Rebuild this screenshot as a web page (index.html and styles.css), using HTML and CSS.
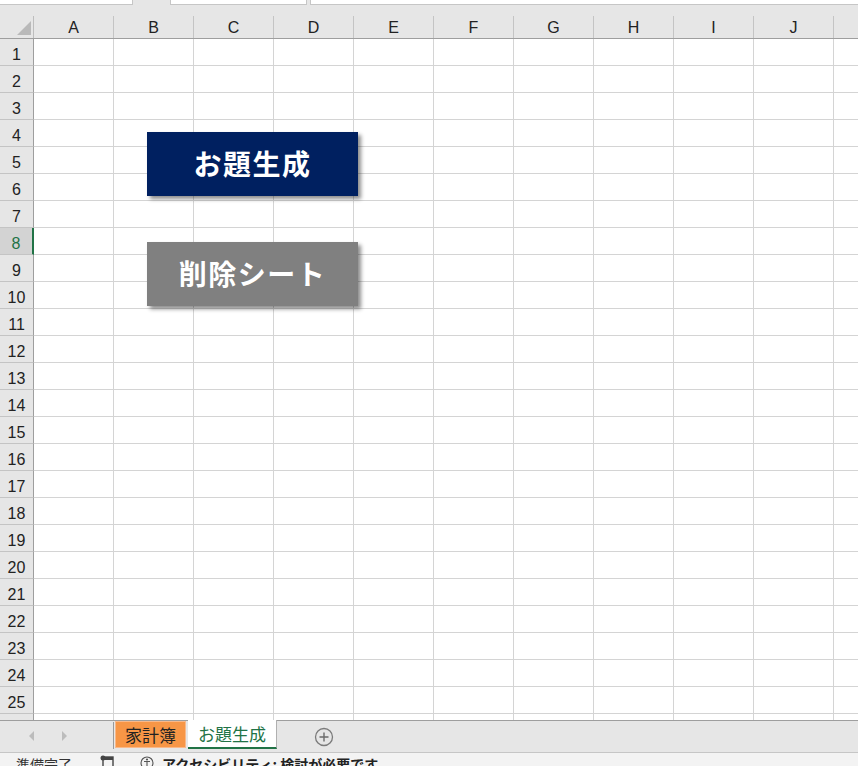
FILE: index.html
```html
<!DOCTYPE html>
<html lang="ja">
<head>
<meta charset="utf-8">
<title>Excel</title>
<link rel="stylesheet" href="styles.css">
</head>
<body>
<div class="app">
  <div class="formula-strip">
    <div class="fbox fbox-name"></div>
    <div class="fbox fbox-mid"></div>
    <div class="fbox fbox-formula"></div>
  </div>

  <div class="col-header">
    <div class="corner"><span class="corner-tri"></span></div>
    <div class="ch">A</div><div class="ch">B</div><div class="ch">C</div><div class="ch">D</div><div class="ch">E</div>
    <div class="ch">F</div><div class="ch">G</div><div class="ch">H</div><div class="ch">I</div><div class="ch">J</div><div class="ch"></div>
  </div>

  <div class="sheet">
    <div class="row"><div class="rh">1</div><div class="cells"></div></div>
    <div class="row"><div class="rh">2</div><div class="cells"></div></div>
    <div class="row"><div class="rh">3</div><div class="cells"></div></div>
    <div class="row"><div class="rh">4</div><div class="cells"></div></div>
    <div class="row"><div class="rh">5</div><div class="cells"></div></div>
    <div class="row"><div class="rh">6</div><div class="cells"></div></div>
    <div class="row"><div class="rh">7</div><div class="cells"></div></div>
    <div class="row"><div class="rh rh-active">8</div><div class="cells"></div></div>
    <div class="row"><div class="rh">9</div><div class="cells"></div></div>
    <div class="row"><div class="rh">10</div><div class="cells"></div></div>
    <div class="row"><div class="rh">11</div><div class="cells"></div></div>
    <div class="row"><div class="rh">12</div><div class="cells"></div></div>
    <div class="row"><div class="rh">13</div><div class="cells"></div></div>
    <div class="row"><div class="rh">14</div><div class="cells"></div></div>
    <div class="row"><div class="rh">15</div><div class="cells"></div></div>
    <div class="row"><div class="rh">16</div><div class="cells"></div></div>
    <div class="row"><div class="rh">17</div><div class="cells"></div></div>
    <div class="row"><div class="rh">18</div><div class="cells"></div></div>
    <div class="row"><div class="rh">19</div><div class="cells"></div></div>
    <div class="row"><div class="rh">20</div><div class="cells"></div></div>
    <div class="row"><div class="rh">21</div><div class="cells"></div></div>
    <div class="row"><div class="rh">22</div><div class="cells"></div></div>
    <div class="row"><div class="rh">23</div><div class="cells"></div></div>
    <div class="row"><div class="rh">24</div><div class="cells"></div></div>
    <div class="row"><div class="rh">25</div><div class="cells"></div></div>
    <div class="row"><div class="rh"></div><div class="cells"></div></div>

    <div class="shape shape-navy">お題生成</div>
    <div class="shape shape-gray">削除シート</div>
  </div>

  <div class="tabbar">
    <div class="tab-nav">
      <svg class="nav-arrow" width="6" height="10" viewBox="0 0 6 10"><path d="M5 0 L0 5 L5 10 Z" fill="#bcbcbc"/></svg>
      <svg class="nav-arrow" width="6" height="10" viewBox="0 0 6 10"><path d="M1 0 L6 5 L1 10 Z" fill="#bcbcbc"/></svg>
    </div>
    <div class="tab-sep"></div>
    <div class="tab tab-orange">家計簿</div>
    <div class="tab tab-active">お題生成</div>
    <div class="tab-add">
      <svg width="20" height="20" viewBox="0 0 20 20"><circle cx="10" cy="10" r="8.5" fill="none" stroke="#7b7b7b" stroke-width="1.3"/><path d="M10 5.5 V14.5 M5.5 10 H14.5" stroke="#6b6b6b" stroke-width="1.4"/></svg>
    </div>
  </div>

  <div class="statusbar">
    <span class="st-ready">準備完了</span>
    <svg class="st-icon" width="16" height="14" viewBox="0 0 16 14"><rect x="3" y="2" width="10" height="10" fill="none" stroke="#444" stroke-width="1.4"/><rect x="3" y="2" width="10" height="3" fill="#444"/><circle cx="3" cy="3" r="2.5" fill="#444"/></svg>
    <svg class="st-icon st-acc" width="16" height="14" viewBox="0 0 16 14"><circle cx="7" cy="8" r="6" fill="none" stroke="#555" stroke-width="1.1"/><circle cx="7" cy="4.5" r="1.1" fill="#555"/><path d="M4 6.5 H10 M7 6.5 V12" stroke="#555" stroke-width="1.1"/></svg>
    <span class="st-acc-text">アクセシビリティ: 検討が必要です</span>
  </div>
</div>
</body>
</html>
```

FILE: styles.css
```css
* { box-sizing: border-box; }

html, body {
  margin: 0;
  padding: 0;
}

body {
  width: 858px;
  height: 766px;
  overflow: hidden;
  background: #e6e6e6;
  font-family: "Liberation Sans", Arial, "Noto Sans CJK JP", sans-serif;
  color: #222;
}

.app {
  width: 858px;
  height: 766px;
  display: flex;
  flex-direction: column;
  overflow: hidden;
}

/* top strip (remains of the formula bar) */
.formula-strip {
  height: 16px;
  flex: none;
  display: flex;
  align-items: flex-start;
}

.fbox {
  height: 5px;
  background: #fff;
  border: 1px solid #c6c6c6;
  border-top: none;
}

.fbox-name { width: 133px; border-left: none; }
.fbox-mid { width: 137px; margin-left: 37px; }
.fbox-formula { flex: 1; margin-left: 3px; border-right: none; }

/* column header */
.col-header {
  height: 23px;
  flex: none;
  display: flex;
  border-bottom: 1px solid #9e9e9e;
  background: #e6e6e6;
}

.corner {
  width: 34px;
  flex: none;
  border-right: 1px solid #bdbdbd;
  position: relative;
}

.corner-tri {
  position: absolute;
  right: 2px;
  bottom: 3px;
  width: 0;
  height: 0;
  border-left: 14px solid transparent;
  border-bottom: 14px solid #b9b9b9;
}

.ch {
  width: 80px;
  flex: none;
  border-right: 1px solid #c4c4c4;
  text-align: center;
  font-size: 16px;
  line-height: 24px;
  color: #222;
}

/* sheet grid */
.sheet {
  flex: 1;
  position: relative;
  overflow: hidden;
  background: #fff;
}

.row {
  display: flex;
  height: 27px;
}

.rh {
  width: 34px;
  flex: none;
  background: #e6e6e6;
  border-right: 1px solid #9e9e9e;
  border-bottom: 1px solid #c4c4c4;
  text-align: center;
  font-size: 16px;
  line-height: 31px;
  color: #222;
}

.rh-active {
  background: #d3d3d3;
  color: #217346;
  border-right: 2px solid #217346;
}

.cells {
  flex: 1;
  border-bottom: 1px solid #d4d4d4;
  background: repeating-linear-gradient(to right, #fff 0 79px, #d4d4d4 79px 80px);
}

/* floating shapes (buttons) */
.shape {
  position: absolute;
  left: 147px;
  width: 211px;
  height: 64px;
  display: flex;
  align-items: center;
  justify-content: center;
  padding-bottom: 3px;
  color: #fff;
  font-family: "Noto Sans CJK JP", sans-serif;
  font-weight: 700;
  font-size: 28px;
  letter-spacing: 1.5px;
  box-shadow: 3px 3px 4px rgba(0, 0, 0, 0.45);
}

.shape-navy {
  top: 93px;
  background: #002060;
}

.shape-gray {
  top: 203px;
  background: #808080;
}

/* sheet tab bar */
.tabbar {
  height: 32px;
  flex: none;
  display: flex;
  align-items: flex-start;
  background: #e6e6e6;
  border-top: 1px solid #9e9e9e;
}

.tab-nav {
  width: 113px;
  height: 30px;
  display: flex;
  align-items: center;
  padding-left: 29px;
  gap: 26px;
}

.tab-sep {
  width: 1px;
  height: 27px;
  margin-top: 1px;
  background: #9a9a9a;
}

.tab {
  height: 28px;
  font-family: "Noto Sans CJK JP", sans-serif;
  font-size: 17px;
  line-height: 26px;
  text-align: center;
}

.tab-orange {
  width: 71px;
  margin-left: 1px;
  margin-top: 0;
  height: 27px;
  background: #f79646;
  border: 1px solid #f9b98a;
  color: #222;
}

.tab-active {
  width: 89px;
  margin-left: 2px;
  margin-top: -1px;
  height: 29px;
  background: #fff;
  color: #217346;
  border-bottom: 2px solid #217346;
  border-right: 1px solid #b0b0b0;
  line-height: 28px;
}

.tab-add {
  margin-left: 37px;
  margin-top: 6px;
  height: 20px;
}

/* status bar */
.statusbar {
  height: 14px;
  flex: none;
  background: #f3f3f3;
  border-top: 1px solid #c6c6c6;
  display: flex;
  align-items: flex-start;
  font-family: "Noto Sans CJK JP", sans-serif;
  font-size: 14px;
  line-height: 20px;
  color: #333;
  overflow: hidden;
  white-space: nowrap;
}

.st-ready {
  margin-left: 16px;
  margin-top: 1px;
}

.st-icon {
  margin-left: 28px;
  margin-top: 2px;
}

.st-acc {
  margin-left: 24px;
}

.st-acc-text {
  margin-left: 6px;
  margin-top: 1px;
  font-weight: 700;
  color: #222;
}
```
